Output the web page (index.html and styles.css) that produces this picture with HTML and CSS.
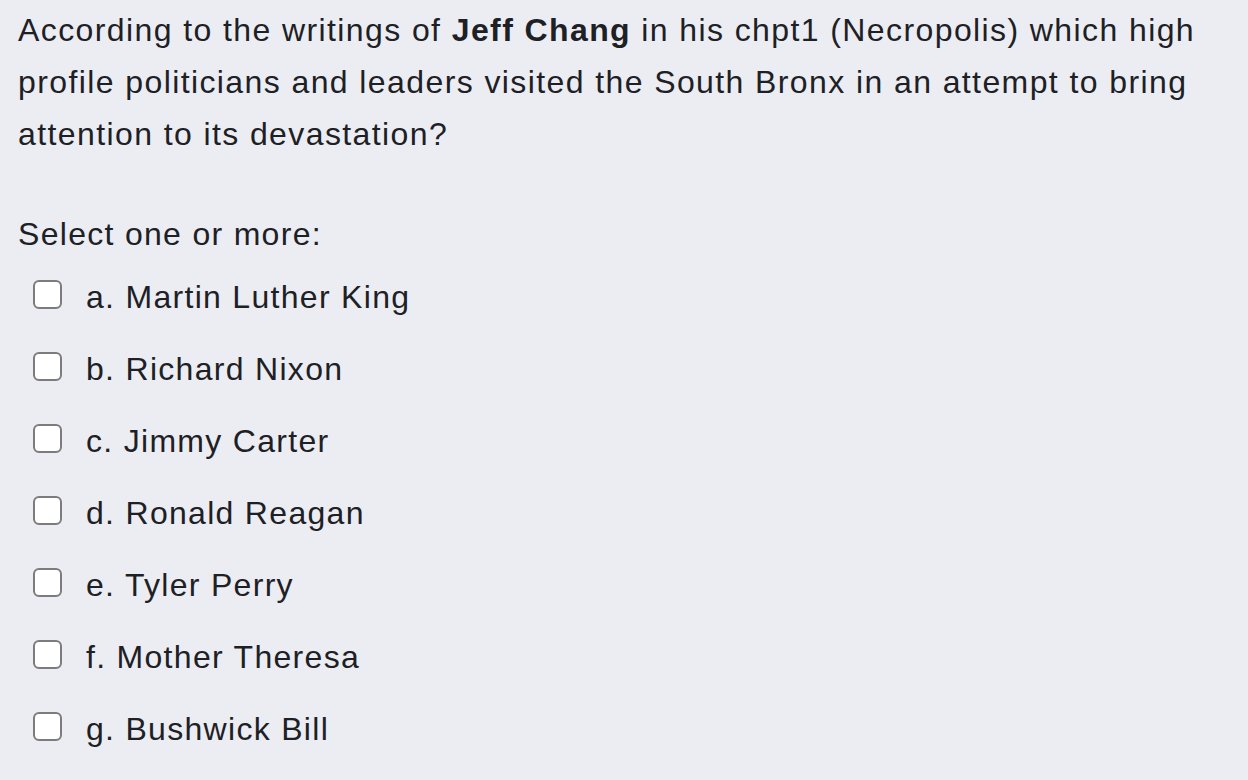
FILE: index.html
```html
<!DOCTYPE html>
<html lang="en">
<head>
<meta charset="utf-8">
<title>Question</title>
<link rel="stylesheet" href="styles.css">
</head>
<body>
<div class="question">
  <p class="qtext">According to the writings of <strong>Jeff Chang</strong> in his chpt1 (Necropolis) which high profile politicians and leaders visited the South Bronx in an attempt to bring attention to its devastation?</p>
  <div class="prompt">Select one or more:</div>
  <div class="answers">
    <label class="option"><span class="box"></span><span class="label">a. Martin Luther King</span></label>
    <label class="option"><span class="box"></span><span class="label">b. Richard Nixon</span></label>
    <label class="option"><span class="box"></span><span class="label">c. Jimmy Carter</span></label>
    <label class="option"><span class="box"></span><span class="label">d. Ronald Reagan</span></label>
    <label class="option"><span class="box"></span><span class="label">e. Tyler Perry</span></label>
    <label class="option"><span class="box"></span><span class="label">f. Mother Theresa</span></label>
    <label class="option"><span class="box"></span><span class="label">g. Bushwick Bill</span></label>
  </div>
</div>
</body>
</html>
```
FILE: styles.css
```css
html, body {
  margin: 0;
  padding: 0;
  background: #ecedf2;
}
body {
  font-family: "Liberation Sans", Arial, sans-serif;
  font-size: 32px;
  letter-spacing: 1.3px;
  color: #1d2125;
}
.question {
  padding: 4px 0 0 18px;
}
.qtext {
  margin: 0;
  line-height: 52px;
  width: 1215px;
  letter-spacing: 1.4px;
}
.qtext strong {
  font-weight: 700;
  letter-spacing: 1.4px;
}
.prompt {
  margin-top: 48px;
  line-height: 52px;
}
.answers {
  display: flex;
  flex-direction: column;
  padding-left: 15px;
  margin-top: 1px;
}
.option {
  display: flex;
  align-items: center;
  height: 72px;
}
.box {
  box-sizing: border-box;
  width: 29px;
  height: 29px;
  border: 2px solid #7c7c7c;
  border-radius: 6px;
  background: #fff;
  flex: none;
  margin-top: -5px;
}
.label {
  margin-left: 24px;
}
```
